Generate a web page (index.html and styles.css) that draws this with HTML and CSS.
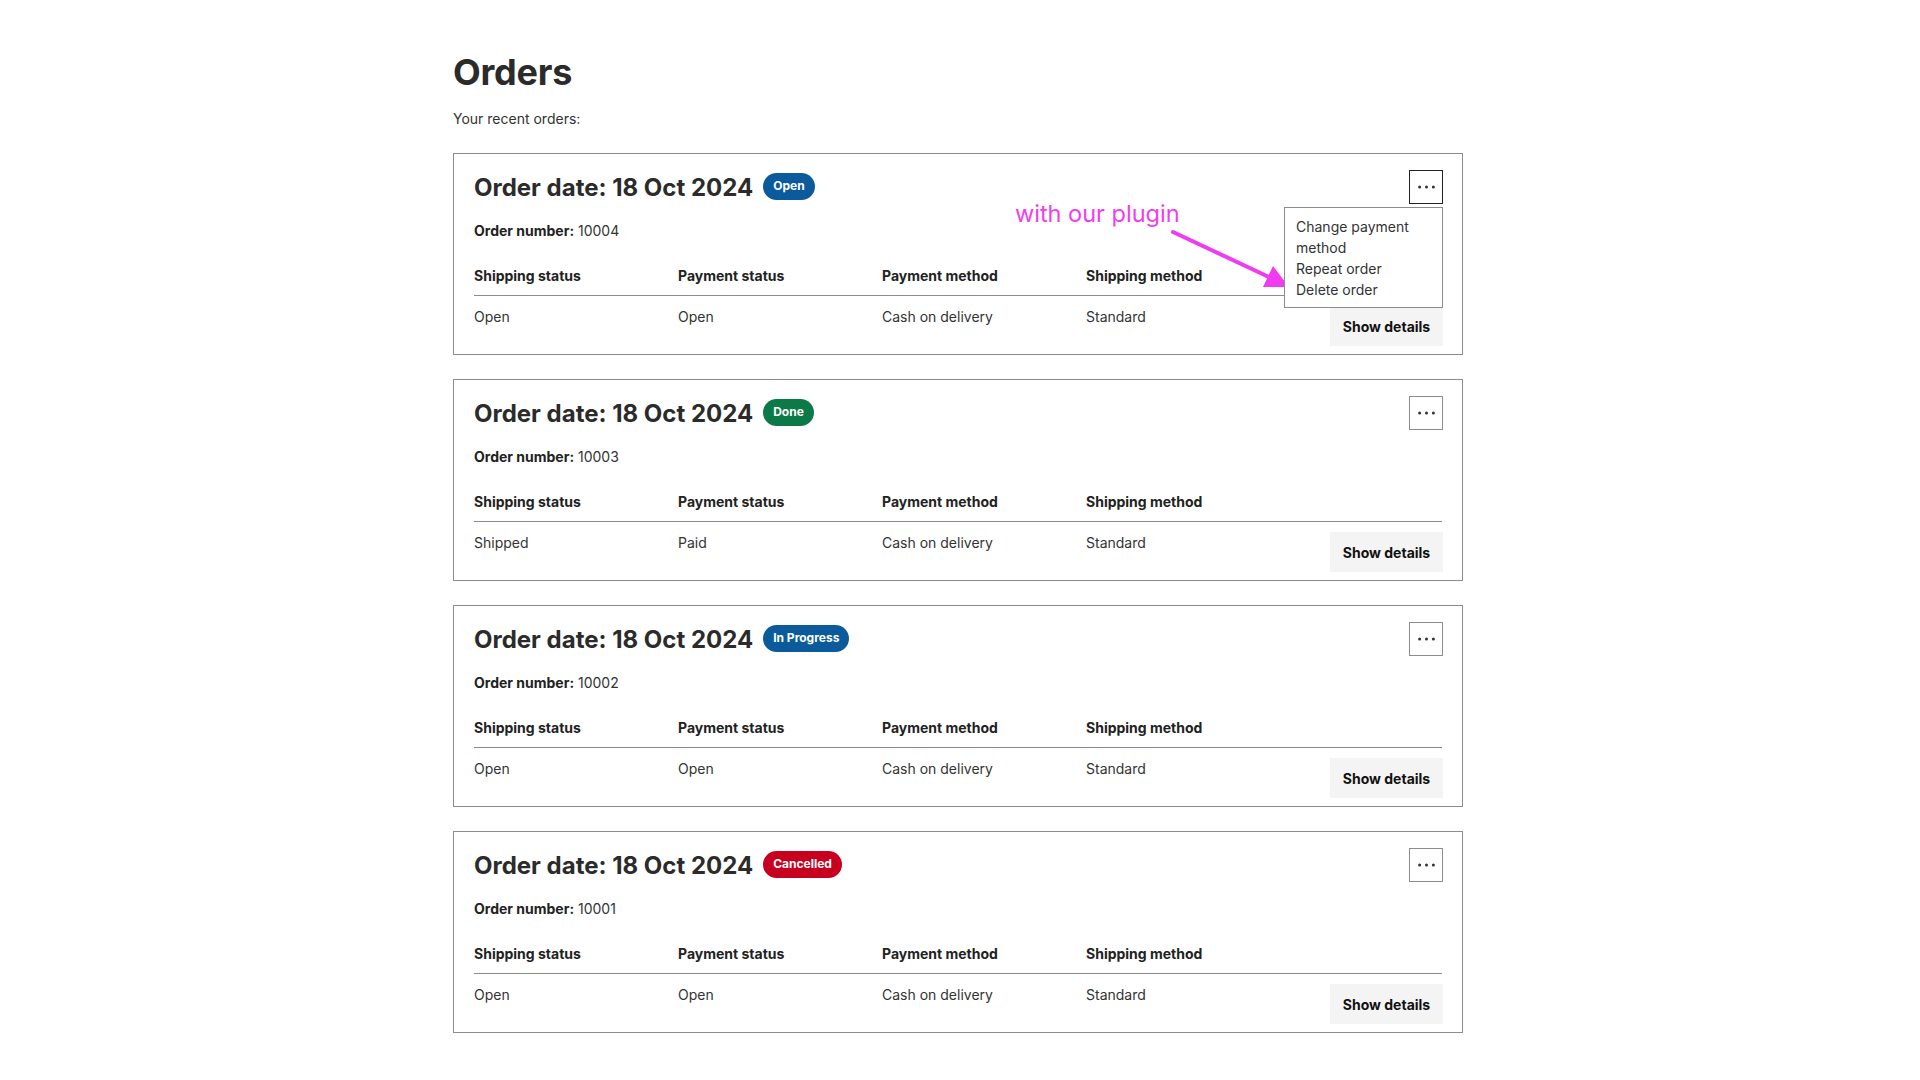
FILE: index.html
```html
<!DOCTYPE html>
<html lang="en">
<head>
<meta charset="utf-8">
<title>Orders</title>
<link rel="stylesheet" href="styles.css">
</head>
<body>
<main class="page">
  <h1 class="page-title">Orders</h1>
  <p class="intro">Your recent orders:</p>

  <section class="orders">
    <article class="order-card">
      <div class="order-head">
        <h2 class="order-title">Order date: 18 Oct 2024</h2>
        <span class="badge badge-open">Open</span>
        <div class="menu-wrap">
          <button class="menu-btn is-open" aria-label="More actions">
            <svg width="17" height="4" viewBox="0 0 17 4"><circle cx="1.6" cy="2" r="1.5"/><circle cx="8.5" cy="2" r="1.5"/><circle cx="15.4" cy="2" r="1.5"/></svg>
          </button>
          <ul class="menu">
            <li>Change payment method</li>
            <li>Repeat order</li>
            <li>Delete order</li>
          </ul>
        </div>
      </div>
      <p class="order-number"><strong>Order number:</strong> 10004</p>
      <table class="order-table">
        <thead><tr><th>Shipping status</th><th>Payment status</th><th>Payment method</th><th>Shipping method</th><th></th></tr></thead>
        <tbody><tr><td>Open</td><td>Open</td><td>Cash on delivery</td><td>Standard</td><td class="action-cell"><button class="details-btn">Show details</button></td></tr></tbody>
      </table>
      <div class="annotation">with our plugin</div>
      <svg class="annotation-arrow" width="130" height="66" viewBox="0 0 130 66">
        <line x1="7" y1="6" x2="104" y2="51.5" stroke="#f03cf0" stroke-width="4" stroke-linecap="round"/>
        <polygon points="123,61 97,61 107,40" fill="#f03cf0"/>
      </svg>
    </article>

    <article class="order-card">
      <div class="order-head">
        <h2 class="order-title">Order date: 18 Oct 2024</h2>
        <span class="badge badge-done">Done</span>
        <div class="menu-wrap">
          <button class="menu-btn" aria-label="More actions">
            <svg width="17" height="4" viewBox="0 0 17 4"><circle cx="1.6" cy="2" r="1.5"/><circle cx="8.5" cy="2" r="1.5"/><circle cx="15.4" cy="2" r="1.5"/></svg>
          </button>
        </div>
      </div>
      <p class="order-number"><strong>Order number:</strong> 10003</p>
      <table class="order-table">
        <thead><tr><th>Shipping status</th><th>Payment status</th><th>Payment method</th><th>Shipping method</th><th></th></tr></thead>
        <tbody><tr><td>Shipped</td><td>Paid</td><td>Cash on delivery</td><td>Standard</td><td class="action-cell"><button class="details-btn">Show details</button></td></tr></tbody>
      </table>
    </article>

    <article class="order-card">
      <div class="order-head">
        <h2 class="order-title">Order date: 18 Oct 2024</h2>
        <span class="badge badge-progress">In Progress</span>
        <div class="menu-wrap">
          <button class="menu-btn" aria-label="More actions">
            <svg width="17" height="4" viewBox="0 0 17 4"><circle cx="1.6" cy="2" r="1.5"/><circle cx="8.5" cy="2" r="1.5"/><circle cx="15.4" cy="2" r="1.5"/></svg>
          </button>
        </div>
      </div>
      <p class="order-number"><strong>Order number:</strong> 10002</p>
      <table class="order-table">
        <thead><tr><th>Shipping status</th><th>Payment status</th><th>Payment method</th><th>Shipping method</th><th></th></tr></thead>
        <tbody><tr><td>Open</td><td>Open</td><td>Cash on delivery</td><td>Standard</td><td class="action-cell"><button class="details-btn">Show details</button></td></tr></tbody>
      </table>
    </article>

    <article class="order-card">
      <div class="order-head">
        <h2 class="order-title">Order date: 18 Oct 2024</h2>
        <span class="badge badge-cancelled">Cancelled</span>
        <div class="menu-wrap">
          <button class="menu-btn" aria-label="More actions">
            <svg width="17" height="4" viewBox="0 0 17 4"><circle cx="1.6" cy="2" r="1.5"/><circle cx="8.5" cy="2" r="1.5"/><circle cx="15.4" cy="2" r="1.5"/></svg>
          </button>
        </div>
      </div>
      <p class="order-number"><strong>Order number:</strong> 10001</p>
      <table class="order-table">
        <thead><tr><th>Shipping status</th><th>Payment status</th><th>Payment method</th><th>Shipping method</th><th></th></tr></thead>
        <tbody><tr><td>Open</td><td>Open</td><td>Cash on delivery</td><td>Standard</td><td class="action-cell"><button class="details-btn">Show details</button></td></tr></tbody>
      </table>
    </article>
  </section>
</main>
</body>
</html>
```

FILE: styles.css
```css
* { box-sizing: border-box; }

html, body {
  margin: 0;
  padding: 0;
  background: #ffffff;
}

body {
  font-family: Inter, "Noto Sans", "Liberation Sans", sans-serif;
  color: #333333;
  font-size: 14px;
  line-height: 20px;
}

.page {
  box-sizing: content-box;
  width: 1010px;
  margin: 0 auto;
  padding: 50px 4px 40px 0;
}

.page-title {
  margin: 0;
  font-size: 36px;
  line-height: 44px;
  font-weight: 700;
  color: #2b2b2b;
  letter-spacing: -0.2px;
}

.intro {
  margin: 15px 0 0;
  font-size: 14px;
  line-height: 20px;
  color: #333;
}

.orders {
  margin-top: 24px;
  display: flex;
  flex-direction: column;
  gap: 24px;
}

.order-card {
  position: relative;
  border: 1px solid #8c8c8c;
  padding: 16px 20px 8px 20px;
  height: 202px;
}

.order-head {
  display: flex;
  align-items: center;
  height: 35px;
}

.order-title {
  margin: 0;
  font-size: 24px;
  line-height: 32px;
  font-weight: 700;
  color: #2b2b2b;
}

.badge {
  margin-left: 10px;
  margin-bottom: 3px;
  height: 27px;
  padding: 0 10px;
  border-radius: 14px;
  display: inline-flex;
  align-items: center;
  font-size: 12px;
  font-weight: 700;
  color: #ffffff;
  line-height: 1;
}
.badge-open { background: #0b5b9c; }
.badge-done { background: #0b7a48; }
.badge-progress { background: #0b5b9c; }
.badge-cancelled { background: #c8001f; }

.menu-wrap {
  margin-left: auto;
  margin-right: -1px;
  position: relative;
  align-self: flex-start;
}

.menu-btn {
  width: 34px;
  height: 34px;
  margin: 0;
  padding: 0;
  border: 1px solid #8c8c8c;
  background: #fff;
  display: flex;
  align-items: center;
  justify-content: center;
  fill: #333;
}
.menu-btn.is-open { border-color: #222; }

.menu {
  position: absolute;
  top: 37px;
  right: 0;
  width: 159px;
  margin: 0;
  padding: 8px 10px 7px 11px;
  list-style: none;
  background: #fff;
  border: 1px solid #8c8c8c;
  font-size: 14px;
  line-height: 21px;
  color: #333;
  z-index: 5;
}

.order-number {
  margin: 16px 0 0;
  font-size: 14px;
  line-height: 20px;
  color: #333;
}
.order-number strong { color: #222; font-weight: 700; }

.order-table {
  margin-top: 25px;
  width: 100%;
  border-collapse: collapse;
  table-layout: fixed;
}

.order-table th {
  width: 204px;
  padding: 0 0 9px;
  text-align: left;
  font-weight: 700;
  color: #222;
  border-bottom: 1px solid #8c8c8c;
}
.order-table th:last-child { width: auto; }

.order-table td {
  padding: 11px 0 0;
  vertical-align: top;
  color: #333;
}

.order-table td.action-cell {
  padding-top: 10px;
  text-align: right;
}

.details-btn {
  height: 40px;
  padding: 0 11px 0 11px;
  width: 113px;
  border: none;
  background: #f4f4f4;
  font-family: inherit;
  font-size: 14px;
  font-weight: 700;
  color: #111;
  margin-right: -1px;
}

.annotation {
  position: absolute;
  left: 561px;
  top: 45px;
  font-size: 23.5px;
  line-height: 30px;
  color: #f03cf0;
  white-space: nowrap;
  z-index: 4;
}

.annotation-arrow {
  position: absolute;
  left: 712px;
  top: 72px;
  z-index: 4;
}
```
